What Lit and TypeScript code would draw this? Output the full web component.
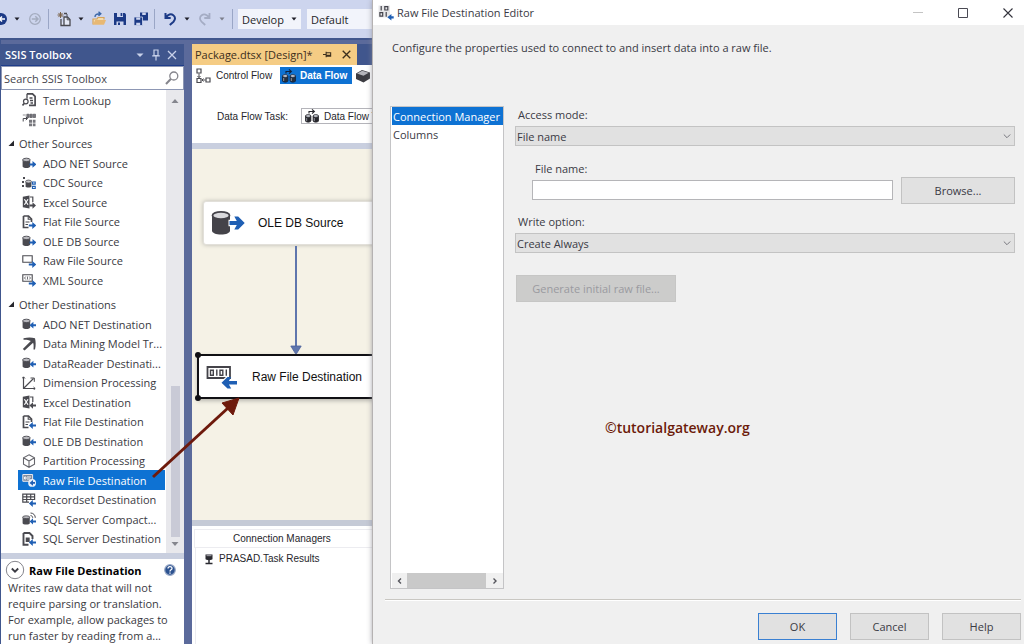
import { LitElement, html, svg, css, TemplateResult, SVGTemplateResult } from "lit";
import { customElement, property, state } from "lit/decorators.js";
import { classMap } from "lit/directives/class-map.js";

const INK = "#4a4a50";
const BLUE = "#1f5fb4";

const arrowRight = svg`<path d="M7.500 7.400h3V5L14.400 8.400 10.500 11.800V9.400h-3z" fill=${BLUE} />`;
const arrowLeft = svg`<path d="M14.400 7.200h-3V4.800L7.500 8.200l3.900 3.400V9.200h3z" fill=${BLUE} />`;
const cornerRight = svg`<path d="M6.800 9.400h3.500V7L14.200 10.500 10.300 14v-2.400H6.800z" fill=${BLUE} />`;
const cornerLeft = svg`<path d="M14.200 9.400h-3.400V7L6.900 10.500 10.800 14v-2.400h3.400z" fill=${BLUE} />`;
const cylinder = svg`<path d="M.6 4.200h7.600v6.400c0 .9-1.700 1.500-3.800 1.500S.6 11.500 .6 10.600z" fill=${INK} /><ellipse cx="4.400" cy="3.900" rx="3.800" ry="1.700" fill="#b9b9be" stroke=${INK} stroke-width=".9" />`;
const page = svg`<path d="M1.500 1h5l3 3v3M1.500 1v11.500h5" fill="none" stroke=${INK} stroke-width="1.700" /><path d="M6.200 1v3.300h3.300M3.500 7h4M3.500 9.500h2.500" fill="none" stroke=${INK} stroke-width="1.100" />`;
const excel = svg`<path d="M.8 1.800 7.500.6v12.800L.8 12.200z" fill=${INK} /><path d="m2.400 4.200 3.600 5.600M6 4.200 2.400 9.800" stroke="#fff" stroke-width="1.200" /><path d="M8 2h2.800v5" fill="none" stroke=${INK} stroke-width="1.200" />`;
const frame = svg`<path d="M.8 1.800h9.400v6.400H.8z" fill="none" stroke=${INK} stroke-width="1.100" />`;

const GLYPHS: Record<string, SVGTemplateResult> = {
  lookup: svg`<path d="M5 .8h5.500l2.600 2.600v9H7" fill="none" stroke=${INK} stroke-width="1.700" /><path d="M5 .8v5M7.500 5h3M8 7.500h3M8.500 10h2.500" stroke=${INK} stroke-width="1.300" /><circle cx="3.800" cy="8.500" r="2.300" fill="#fff" stroke=${INK} stroke-width="1.200" /><path d="m2.300 10.400-1.800 2" stroke=${INK} stroke-width="1.600" />`,
  unpivot: svg`<path d="M.8 2h3M4.800 1.200h2.400v3.300H4.800zM8 1.200h2.300v3.300H8zM11.200 1.200h2.300v3.300h-2.300z" fill="#77777d" stroke=${INK} stroke-width=".6" /><path d="M1.200 8.500V5.500h4M3.800 3.900l1.800 1.600-1.800 1.600" fill="none" stroke=${INK} /><path d="M7 6.800h3v2.900H7zM10.800 6.800h2.700v2.900h-2.700zM7 10.500h3v2.800H7zM10.800 10.500h2.700v2.800h-2.700z" fill="#77777d" />`,
  dbOut: svg`${cylinder}${arrowRight}`,
  dbIn: svg`${cylinder}${arrowLeft}`,
  cdc: svg`<path d="M1 1h2v2H1zM0 5h2v2H0zM0 9h2v2H0z" fill=${INK} /><path d="M3.600 5.800v5c0 1 5.800 1 5.800 0v-5z" fill=${INK} /><ellipse cx="6.500" cy="5.600" rx="2.900" ry="1.500" fill="#c8c8cc" stroke=${INK} stroke-width=".8" /><path d="M10.500 6h2.700v2.200h-2.700zM10.500 10.300h2.700v2.200h-2.700z" fill="none" stroke=${BLUE} stroke-width="1.200" />`,
  excelOut: svg`${excel}<path d="M7.500 9.400h3V7.200L14 10.500 10.500 13.800v-2.300h-3z" fill=${INK} />`,
  excelIn: svg`${excel}<path d="M14 9.400h-3V7.200L7.400 10.500 11 13.800v-2.300h3z" fill=${INK} />`,
  fileOut: svg`${page}${cornerRight}`,
  fileIn: svg`${page}${cornerLeft}`,
  rawOut: svg`${frame}${cornerRight}`,
  xmlOut: svg`${frame}<path d="M3.800 3.500 2.500 5l1.300 1.500M7.200 3.500 8.500 5 7.200 6.500M5.500 3.500v3" fill="none" stroke=${INK} stroke-width=".8" />${cornerRight}`,
  mining: svg`<path d="M1.500 1.200C6 .2 10 .4 13 1.200c.8 3 1 7 0 11.400l-1.500-.2c.3-3 .2-5-.4-6.600L2.600 13.600.8 12 8.800 4C6.800 3 4.500 2.700 1.500 2.800z" fill=${INK} />`,
  dimension: svg`<path d="M1.500 1v11.500H13M1.500 12.500 11.500 2.500" fill="none" stroke=${INK} stroke-width="1.200" /><path d="M8.500 2h3.800v3.800M0 2.500 1.500.8 3 2.500M11.500 11l1.700 1.500-1.700 1.500" fill="none" stroke=${INK} />`,
  partition: svg`<path d="M7 .8 12.500 3.800v6.400L7 13.300 1.500 10.200V3.800zM1.500 3.800 7 7l5.500-3.200M7 7v6" fill="none" stroke="#66666c" stroke-width="1.100" />`,
  rawIn: svg`<path d="M.8 1.500h9.800v6.800H.8z" fill="#7f8ca0" stroke="#e8e8ee" /><path d="M2.500 4h1.500v2H2.500zM5 4h4M5 6h3" fill="none" stroke="#fff" stroke-width=".9" /><circle cx="10.100" cy="9.900" r="3.900" fill="#e9f1fb" /><path d="M13 9.100h-2V7.100L7.500 9.900l3.500 2.800v-2h2z" fill=${BLUE} />`,
  recordset: svg`<path d="M.8 1.200h11.800v8H.8zM.8 3.800h11.800M.8 6.500h11.800M4.700 1.200v8M8.700 1.200v8" fill="none" stroke=${INK} stroke-width="1.200" /><path d="M7 7h7v7H7z" fill="#fff" />${cornerLeft}`,
  compact: svg`<path d="M.6 5.200h7.200v6c0 .8-1.600 1.400-3.600 1.400S.6 12 .6 11.200z" fill=${INK} /><ellipse cx="4.200" cy="5.200" rx="3.600" ry="1.400" fill="#b9b9be" stroke=${INK} stroke-width=".8" /><path d="M8.500 3.600c1.300 0 2.200.9 2.200 2.200M8.500 1c2.800 0 4.800 2 4.800 4.800" fill="none" stroke=${INK} /><path d="M14 8.400h-3V6.200L7.600 9.400 11 12.600v-2.200h3z" fill=${BLUE} />`,
  sqlIn: svg`<path d="M1.500 1h6l3 3v3M1.500 1v11.800h5" fill="none" stroke=${INK} stroke-width="1.900" /><path d="M3.700 5.500h4v4.500h-4z" fill=${INK} />${cornerLeft}`,
};

const glyph = (name: string): TemplateResult =>
  html`<svg class="glyph" viewBox="0 0 14 14" width="14" height="14" aria-hidden="true">${GLYPHS[name]}</svg>`;

const caret = (color = "#1e1e28"): TemplateResult =>
  html`<svg viewBox="0 0 8 8" width="8" height="8" aria-hidden="true"><path d="M1.500 2.500h5L4 5.500z" fill=${color} /></svg>`;

const dataFlowIcon = (line: string, fill: string): TemplateResult => html`
  <svg viewBox="0 0 16 16" width="16" height="16" aria-hidden="true">
    <path d="M5 5.500V3.500h5M8 1.400l2.400 2.100L8 5.600" fill="none" stroke=${line} stroke-width="1.100" />
    <path d="M1.500 8v5c0 1.500 5.400 1.500 5.400 0V8zM9.100 8v5c0 1.500 5.400 1.500 5.400 0V8z" fill=${fill} stroke=${line} stroke-width=".8" />
    <ellipse cx="4.200" cy="8" rx="2.700" ry="1.400" fill="#c9ccd4" stroke=${line} stroke-width=".8" />
    <ellipse cx="11.800" cy="8" rx="2.700" ry="1.400" fill="#c9ccd4" stroke=${line} stroke-width=".8" />
    <path d="M2.700 10v3M10.300 10v3" stroke="#9a9da6" stroke-width=".9" />
  </svg>`;

interface Entry {
  icon: string;
  name: string;
}

const COMMON: Entry[] = [
  { icon: "lookup", name: "Term Lookup" },
  { icon: "unpivot", name: "Unpivot" },
];

const SOURCES: Entry[] = [
  { icon: "dbOut", name: "ADO NET Source" },
  { icon: "cdc", name: "CDC Source" },
  { icon: "excelOut", name: "Excel Source" },
  { icon: "fileOut", name: "Flat File Source" },
  { icon: "dbOut", name: "OLE DB Source" },
  { icon: "rawOut", name: "Raw File Source" },
  { icon: "xmlOut", name: "XML Source" },
];

const DESTINATIONS: Entry[] = [
  { icon: "dbIn", name: "ADO NET Destination" },
  { icon: "mining", name: "Data Mining Model Tr..." },
  { icon: "dbIn", name: "DataReader Destinati..." },
  { icon: "dimension", name: "Dimension Processing" },
  { icon: "excelIn", name: "Excel Destination" },
  { icon: "fileIn", name: "Flat File Destination" },
  { icon: "dbIn", name: "OLE DB Destination" },
  { icon: "partition", name: "Partition Processing" },
  { icon: "rawIn", name: "Raw File Destination" },
  { icon: "recordset", name: "Recordset Destination" },
  { icon: "compact", name: "SQL Server Compact..." },
  { icon: "sqlIn", name: "SQL Server Destination" },
];

const base = css`
  * {
    box-sizing: border-box;
  }
  button,
  input,
  select {
    font: inherit;
    color: inherit;
    margin: 0;
    border: 0;
    border-radius: 0;
    padding: 0;
    background: none;
  }
  select {
    appearance: none;
  }
  h2,
  h3,
  p,
  ul {
    margin: 0;
    padding: 0;
    font: inherit;
    list-style: none;
  }
  svg {
    display: block;
    flex: none;
  }
`;

@customElement("ide-toolbar")
export class IdeToolbar extends LitElement {
  static styles = [
    base,
    css`
      :host {
        display: flex;
        align-items: center;
        height: 38px;
        background: #cdd5ee;
        color: #1e1e28;
      }
      .tool,
      .drop,
      .edge {
        display: flex;
        flex: none;
        align-items: center;
        justify-content: center;
        width: 21px;
        height: 24px;
      }
      .drop {
        width: 14px;
      }
      .edge {
        width: 10px;
        justify-content: flex-start;
      }
      .sep {
        flex: none;
        width: 1px;
        height: 20px;
        margin: 0 4px 0 3px;
        background: #9aa6c6;
      }
      .combo {
        display: grid;
        flex: none;
        align-items: center;
        width: 63px;
        height: 20px;
        margin-left: 1px;
        background: #f2f4fb;
      }
      .combo.wide {
        width: 100px;
        margin-left: 6px;
      }
      .combo select,
      .combo svg {
        grid-area: 1 / 1;
      }
      .combo select {
        height: 20px;
        padding: 0 4px;
      }
      .combo svg {
        justify-self: end;
        margin-right: 3px;
        pointer-events: none;
      }
    `,
  ];

  render() {
    return html`
      <button class="edge" aria-label="Navigate backward">
        <svg viewBox="0 0 8 14" width="8" height="14"><circle cx="1" cy="7" r="6" fill="#1c3a86" /><path d="M5 7H0M2 4.500-.5 7 2 9.500" fill="none" stroke="#fff" stroke-width="1.500" /></svg>
      </button>
      <button class="drop" aria-label="Backward history">${caret()}</button>
      <button class="tool" aria-label="Navigate forward">
        <svg viewBox="0 0 14 14" width="14" height="14"><circle cx="7" cy="7" r="5.300" fill="none" stroke="#a4acbf" stroke-width="1.300" /><path d="M3.800 7h6M7.300 4.300 10 7l-2.700 2.700" fill="none" stroke="#a4acbf" stroke-width="1.500" /></svg>
      </button>
      <span class="sep"></span>
      <button class="tool" aria-label="New project">
        <svg viewBox="0 0 16 16" width="16" height="16"><path d="M5 8v6.500h3M8 2.500h3M8 6h3.500l2.500 2.500v6H8V6z" fill="#e6eaf6" stroke="#4a4a50" stroke-width="1.300" /><path d="M11 3v2.500M11.200 6v2.800H14" fill="none" stroke="#4a4a50" /><path d="M4.500 1v6M1.500 4h6M2.400 1.900l4.200 4.200M6.600 1.900 2.400 6.100" stroke="#7a6248" stroke-width="1" /></svg>
      </button>
      <button class="drop" aria-label="New options">${caret()}</button>
      <button class="tool" aria-label="Open file">
        <svg viewBox="0 0 16 16" width="16" height="16"><path d="M2 13.500V8h4l1-1.500h6v2" fill="#f3dcae" stroke="#d7a45a" stroke-width="1.200" /><path d="M2 13.800 4.200 9H15l-2 4.800z" fill="#e8b873" /><path d="M4 6C4 3.500 6 2.800 9.500 2.800M7.500.8l2.300 2-2.300 2" fill="none" stroke="#3a66a8" stroke-width="1.400" /></svg>
      </button>
      <button class="tool" aria-label="Save">
        <svg viewBox="0 0 14 14" width="14" height="14"><path d="M1 1h10.800L13 2.200V13H1z" fill="#1c3a86" /><path d="M4 1h6v4H4zM3.500 9.500h7V13h-7z" fill="#cdd5ee" /><path d="M7.600 1h1.700v3H7.600zM5 10.500h2V13H5z" fill="#1c3a86" /></svg>
      </button>
      <button class="tool" aria-label="Save all">
        <svg viewBox="0 0 16 16" width="16" height="16"><path d="M7 1.500h8v8H7z" fill="#1c3a86" /><path d="M9.200 1.500h3.600v2.500H9.200z" fill="#cdd5ee" /><path d="M1 6h8.500v8.500H1z" fill="#1c3a86" stroke="#cdd5ee" stroke-width=".8" /><path d="M3.200 6.400h4v2.400h-4zM3.200 11.800h4v2.300h-4z" fill="#cdd5ee" /></svg>
      </button>
      <span class="sep"></span>
      <button class="tool" aria-label="Undo">
        <svg viewBox="0 0 14 14" width="14" height="14"><path d="M2.500 1v5h5.200M2.800 5.600C5 2.300 8 1.600 10.300 3.200c2.300 1.700 2.200 4.500.2 6.500L6.800 13" fill="none" stroke="#1c3a86" stroke-width="2" /></svg>
      </button>
      <button class="drop" aria-label="Undo history">${caret()}</button>
      <button class="tool" aria-label="Redo">
        <svg viewBox="0 0 14 14" width="14" height="14"><path d="M11.500 1v5H6.300M11.200 5.600C9 2.300 6 1.600 3.700 3.200 1.400 4.900 1.500 7.700 3.500 9.700L7.200 13" fill="none" stroke="#a4acc4" stroke-width="1.800" /></svg>
      </button>
      <button class="drop" aria-label="Redo history">${caret("#7c7f8c")}</button>
      <span class="sep"></span>
      <span class="combo">
        <select aria-label="Solution configuration"><option>Develop</option></select>
        ${caret()}
      </span>
      <span class="combo wide">
        <select aria-label="Solution platform"><option>Default</option></select>
        ${caret()}
      </span>
    `;
  }
}

@customElement("ssis-toolbox")
export class SsisToolbox extends LitElement {
  @state() private selected = "Raw File Destination";

  static styles = [
    base,
    css`
      :host {
        display: flex;
        flex-direction: column;
        min-height: 0;
        background: #fff;
        color: #3a3a42;
      }
      .head {
        display: flex;
        flex: none;
        align-items: center;
        height: 22px;
        padding: 0 4px;
        background: #40568d;
        border-bottom: 1px solid #1f3d8a;
        color: #fff;
      }
      .head h2 {
        flex: 1;
        font-weight: 600;
      }
      .head button {
        display: grid;
        place-items: center;
        width: 16px;
        height: 16px;
      }
      .search {
        display: flex;
        flex: none;
        align-items: center;
        height: 24px;
        padding: 0 4px 0 2px;
        border: 1px solid #8d97b4;
      }
      .search input {
        flex: 1;
        min-width: 0;
        height: 20px;
        padding: 0;
        outline: 0;
      }
      .search input::placeholder {
        color: #44444c;
        opacity: 1;
      }
      .scroll {
        display: flex;
        flex: 1;
        min-height: 0;
        overflow: hidden;
      }
      .list {
        display: flex;
        flex: 1;
        flex-direction: column;
        justify-content: flex-end;
        min-width: 0;
        padding-bottom: 5px;
      }
      .bar {
        display: flex;
        flex: none;
        flex-direction: column;
        align-items: center;
        width: 18px;
        padding: 7px 0 5px;
        background: #e8e8ec;
      }
      .track {
        display: flex;
        flex: 1;
        align-items: flex-end;
        padding-bottom: 3px;
      }
      .thumb {
        width: 9px;
        height: 35%;
        background: #c9cad6;
      }
      .item {
        display: flex;
        gap: 7px;
        align-items: center;
        width: calc(100% - 18px);
        height: 20px;
        margin-left: 17px;
        padding-left: 4px;
        text-align: left;
        white-space: nowrap;
      }
      li:nth-child(even) .item {
        height: 19px;
      }
      .item.on {
        background: #0e72d3;
        color: #fff;
      }
      .group {
        display: flex;
        flex: none;
        gap: 4px;
        align-items: center;
        height: 20px;
        margin-top: 4px;
        padding-left: 6px;
      }
      .about {
        flex: none;
        border-top: 6px solid #c9cfdf;
        padding: 1px 4px 0 4px;
      }
      .row {
        display: flex;
        align-items: center;
        gap: 4px;
        height: 20px;
      }
      .row h3 {
        flex: 1;
        color: #000;
        font-weight: 700;
      }
      .text {
        height: 64px;
        padding: 0 2px 0 3px;
        line-height: 16px;
      }
    `,
  ];

  private items(entries: Entry[]) {
    return html`<ul>
      ${entries.map(
        (e) => html`<li>
          <button class=${classMap({ item: true, on: e.name === this.selected })} @click=${() => (this.selected = e.name)}>
            ${glyph(e.icon)}<span>${e.name}</span>
          </button>
        </li>`
      )}
    </ul>`;
  }

  private group(name: string) {
    return html`<button class="group" aria-expanded="true">
      <svg viewBox="0 0 8 8" width="8" height="8" aria-hidden="true"><path d="M7 1.500v5.500H1.500z" fill="#26262c" /></svg>${name}
    </button>`;
  }

  render() {
    return html`
      <div class="head">
        <h2>SSIS Toolbox</h2>
        <button aria-label="Window options"><svg viewBox="0 0 10 10" width="10" height="10"><path d="M1.500 3.500h7L5 7z" fill="#c9d2ea" /></svg></button>
        <button aria-label="Pin"><svg viewBox="0 0 10 12" width="10" height="12"><path d="M3 1h4v5.500H3zM1.200 6.800h7.600M5 7v4.500" fill="none" stroke="#c9d2ea" stroke-width="1.200" /></svg></button>
        <button aria-label="Close"><svg viewBox="0 0 10 10" width="10" height="10"><path d="m1 1 8 8M9 1 1 9" stroke="#c9d2ea" stroke-width="1.300" /></svg></button>
      </div>
      <div class="search">
        <input type="text" placeholder="Search SSIS Toolbox" aria-label="Search SSIS Toolbox" />
        <svg viewBox="0 0 14 14" width="14" height="14" aria-hidden="true"><circle cx="8.800" cy="5" r="4" fill="none" stroke="#85858c" stroke-width="1.300" /><path d="M5.800 8 1 13" stroke="#85858c" stroke-width="2" /></svg>
      </div>
      <div class="scroll">
        <div class="list">
          ${this.items(COMMON)} ${this.group("Other Sources")} ${this.items(SOURCES)}
          ${this.group("Other Destinations")} ${this.items(DESTINATIONS)}
        </div>
        <div class="bar" aria-hidden="true">
          <svg viewBox="0 0 8 8" width="8" height="8"><path d="M.5 6h7L4 2z" fill="#85868e" /></svg>
          <div class="track"><div class="thumb"></div></div>
          <svg viewBox="0 0 8 8" width="8" height="8"><path d="M.5 2h7L4 6z" fill="#85868e" /></svg>
        </div>
      </div>
      <section class="about">
        <div class="row">
          <button aria-label="Collapse description"><svg viewBox="0 0 20 20" width="20" height="20"><circle cx="10" cy="10" r="8.700" fill="#fff" stroke="#85858c" /><path d="m6.800 8.500 3.200 3.200 3.200-3.200" fill="none" stroke="#3a3a42" stroke-width="1.800" /></svg></button>
          <h3>Raw File Destination</h3>
          <button aria-label="Help"><svg viewBox="0 0 20 20" width="20" height="20"><circle cx="10" cy="10" r="5.300" fill="#2c5290" stroke="#98a8c6" stroke-width="1.200" /><path d="M8 8.600c0-2.600 4-2.500 4-.2 0 1.500-2 1.400-2 3M10 12.400v1.300" fill="none" stroke="#fff" stroke-width="1.300" /></svg></button>
        </div>
        <p class="text">Writes raw data that will not require parsing or translation. For example, allow packages to run faster by reading from a...</p>
      </section>
    `;
  }
}

@customElement("package-designer")
export class PackageDesigner extends LitElement {
  static styles = [
    base,
    css`
      :host {
        display: flex;
        flex-direction: column;
        min-width: 0;
        color: #26262c;
        font-family: "Liberation Sans", Arial, sans-serif;
        font-size: 10px;
      }
      .strip {
        display: flex;
        flex: none;
        height: 21px;
        background: #40568d;
      }
      .doc {
        display: flex;
        align-items: center;
        gap: 10px;
        width: 165px;
        padding: 0 8px 0 3px;
        background: #f5cc84;
        color: #3d2f1c;
        font-family: "Open Sans", "Noto Sans", sans-serif;
        font-size: 11px;
        white-space: nowrap;
      }
      .doc span {
        flex: 1;
      }
      .top {
        flex: none;
        height: 84px;
        border-bottom: 6px solid #c9cfdf;
        background: #fff;
      }
      .views {
        display: flex;
        align-items: center;
        gap: 3px;
        padding: 2px 3px 0;
      }
      .view {
        display: flex;
        align-items: center;
        gap: 5px;
        height: 17px;
        white-space: nowrap;
      }
      .view.plain {
        width: 82px;
      }
      .view.on {
        gap: 3px;
        width: 72px;
        padding-left: 1px;
        background: #0e72d3;
        color: #fff;
        font-weight: 700;
      }
      .task {
        display: flex;
        align-items: center;
        gap: 13px;
        padding: 24px 0 0 25px;
        white-space: nowrap;
      }
      .pick {
        display: flex;
        flex: 1;
        align-items: center;
        gap: 4px;
        height: 16px;
        padding-left: 2px;
        border: 1px solid #b4b4ba;
      }
      .canvas {
        position: relative;
        flex: 1;
        min-height: 0;
        overflow: hidden;
        background: #f5f2e6;
      }
      .node {
        position: absolute;
        display: flex;
        align-items: center;
        gap: 13px;
        width: 260px;
        height: 44px;
        padding-left: 7px;
        background: #fff;
        color: #111;
        font-size: 12px;
      }
      .source {
        top: 52px;
        left: 11px;
        border: 1px solid #e2e0da;
        border-radius: 3px;
        box-shadow: 0 0 4px #b9b7b0;
      }
      .target {
        top: 205px;
        left: 5px;
        height: 45px;
        border: 2px solid #101014;
        box-shadow: 0 2px 4px #b9b7b0;
      }
      .link,
      .grips {
        position: absolute;
      }
      .link {
        top: 97px;
        left: 98px;
      }
      .grips {
        top: 202px;
        left: 2px;
      }
      .managers {
        flex: none;
        height: 124px;
        padding: 3px 0 0 2px;
        border-top: 6px solid #c5cad6;
        background: #fff;
        box-shadow: 0 -1px 0 #8f929c;
      }
      .managers h3 {
        height: 19px;
        padding-left: 38px;
        border: 1px solid #ececf0;
        line-height: 17px;
      }
      .conn {
        display: flex;
        gap: 4px;
        height: 96px;
        align-items: flex-start;
        padding: 5px 0 0 7px;
        margin-left: 1px;
        border-left: 1px solid #ececf0;
        line-height: 12px;
      }
    `,
  ];

  render() {
    return html`
      <div class="strip">
        <div class="doc">
          <span>Package.dtsx [Design]*</span>
          <svg viewBox="0 0 10 10" width="9" height="9" aria-hidden="true"><path d="M0 5h3M3.500 2v6M3.500 3h5v4h-5M3.500 6h5" fill="none" stroke="#3d2f1c" stroke-width="1.200" /></svg>
          <svg viewBox="0 0 10 10" width="9" height="9" aria-hidden="true"><path d="m.8.8 8.400 8.400M9.200.8.8 9.200" stroke="#3d2f1c" stroke-width="1.500" /></svg>
        </div>
      </div>
      <div class="top">
        <div class="views">
          <button class="view plain">
            <svg viewBox="0 0 16 16" width="16" height="16" aria-hidden="true"><path d="M2 1h4v4H2zM2 10.500h4v4H2zM11 10h4v4h-4z" fill="#fff" stroke="#4a4a50" stroke-width="1.200" /><path d="M4 5.500v4M2.500 8 4 9.700 5.500 8M10.500 12H7M8.500 10.500 7 12l1.500 1.500" fill="none" stroke="#4a4a50" /></svg>
            Control Flow
          </button>
          <button class="view on">${dataFlowIcon("#10233f", "#26303e")}Data Flow</button>
          <svg viewBox="0 0 16 16" width="16" height="16" aria-hidden="true"><path d="m1 5.500 6-3.500 8 2.500v6L8.500 14.500 1 11z" fill="#3c3c42" /><path d="m2 5.500 5.200-2.700 6.500 2L8.500 7.700z" fill="#b4b4ba" /></svg>
        </div>
        <div class="task">
          <span>Data Flow Task:</span>
          <div class="pick">${dataFlowIcon("#26262c", "#26262c")}<span>Data Flow Task</span></div>
        </div>
      </div>
      <div class="canvas">
        <div class="node source">
          <svg viewBox="0 0 34 26" width="34" height="26" aria-hidden="true">
            <path d="M1 5.500v15c0 2.500 4 4 9 4s9-1.500 9-4v-15z" fill="#444349" />
            <ellipse cx="10" cy="5.500" rx="8.500" ry="3.700" fill="#d9d9dc" stroke="#444349" stroke-width="1.800" />
            <path d="M17.500 9.800h7V4.500l9.500 8.500-9.500 8.500v-5.300h-7z" fill="#fff" />
            <path d="M18.500 11h7.300l-2.500-4.500h3.900L33.700 13l-6.500 6.500h-3.900l2.500-4.500h-7.300z" fill=${BLUE} />
          </svg>
          <span>OLE DB Source</span>
        </div>
        <svg class="link" viewBox="0 0 12 109" width="12" height="109" aria-hidden="true">
          <path d="M6 0v101" stroke="#5f76ad" stroke-width="2" /><path d="M.8 100h10.400L6 108.500z" fill="#5f76ad" stroke="#4a609a" stroke-width=".8" />
        </svg>
        <div class="node target">
          <svg viewBox="0 0 33 26" width="33" height="26" aria-hidden="true">
            <path d="M1.500 3h22.500v11H1.500z" fill="#fff" stroke="#444349" stroke-width="1.800" />
            <path d="M4.500 6.200h2.800v5H4.500zM14 6.200h2.800v5H14zM10.800 5.600v6.200M20.300 5.600v6.200" fill="none" stroke="#444349" stroke-width="1.400" />
            <path d="M14 18.500 22 11v4.500h10v6H22V26z" fill="#fff" />
            <path d="M15.500 18.800 21.500 13h3.700l-2.300 4H31v3.600h-8.100l2.300 4h-3.700z" fill=${BLUE} />
          </svg>
          <span>Raw File Destination</span>
        </div>
        <svg class="grips" viewBox="0 0 8 52" width="8" height="52" aria-hidden="true">
          <circle cx="4" cy="4" r="3" fill="#101014" /><circle cx="4" cy="47" r="3" fill="#101014" />
        </svg>
      </div>
      <section class="managers">
        <h3>Connection Managers</h3>
        <div class="conn">
          <svg viewBox="0 0 12 12" width="12" height="12" aria-hidden="true"><path d="M2.500 1.500h7V6c0 1.500-7 1.500-7 0z" fill="#2a2a30" /><path d="M3.500 1.200h5v2h-5z" fill="#8f8f96" /><path d="M6 7v3.500M2.500 10.500h7" stroke="#2a2a30" stroke-width="1.500" /></svg>
          <span>PRASAD.Task Results</span>
        </div>
      </section>
    `;
  }
}

@customElement("raw-file-editor")
export class RawFileEditor extends LitElement {
  @property() page = "Connection Manager";

  static styles = [
    base,
    css`
      :host {
        display: flex;
        flex-direction: column;
        background: #f0f0f0;
        color: #3a3a44;
      }
      .title {
        display: flex;
        flex: none;
        align-items: center;
        gap: 3px;
        height: 25px;
        padding: 0 6px 0 5px;
        background: #fff;
      }
      .title h2 {
        flex: 1;
      }
      .wins {
        display: flex;
        gap: 25px;
      }
      .wins button {
        display: grid;
        place-items: center;
        width: 20px;
        height: 20px;
      }
      .intro {
        flex: none;
        padding: 15px 19px 50px;
        line-height: 16px;
      }
      .main {
        display: flex;
        flex: 1;
        gap: 11px;
        min-height: 0;
        padding: 0 9px 0 17px;
      }
      .pages {
        display: flex;
        flex: none;
        flex-direction: column;
        width: 114px;
        padding-left: 1px;
        border: 1px solid #c4c4c6;
        background: #fff;
        overflow: hidden;
      }
      .pages ul {
        flex: 1;
      }
      .pages li button {
        display: block;
        width: 100%;
        height: 18px;
        padding-left: 1px;
        text-align: left;
        white-space: nowrap;
      }
      .pages .on {
        background: #0e72d3;
        color: #fff;
      }
      .hbar {
        display: flex;
        height: 15px;
        background: #f0f0f0;
      }
      .hbar button {
        display: grid;
        place-items: center;
        width: 15px;
      }
      .hbar button:last-child {
        width: 17px;
      }
      .hbar .thumb {
        flex: 1;
        background: #c9c9c9;
      }
      .form {
        display: flex;
        flex: 1;
        flex-direction: column;
        min-width: 0;
        padding-top: 1px;
      }
      .field {
        display: flex;
        flex-direction: column;
        gap: 3px;
      }
      .field label {
        padding-left: 3px;
        line-height: 16px;
      }
      .drop {
        display: grid;
        align-items: center;
      }
      .drop select,
      .drop svg {
        grid-area: 1 / 1;
      }
      .drop select {
        height: 20px;
        padding: 0 1px;
        border: 1px solid #c3c3c3;
        background: #e1e1e1;
      }
      .drop svg {
        justify-self: end;
        margin-right: 3px;
        pointer-events: none;
      }
      .file {
        display: flex;
        align-items: flex-end;
        gap: 8px;
        margin: 15px 0 10px;
        padding-left: 17px;
      }
      .file .field {
        flex: 1;
        padding-bottom: 4px;
      }
      .file input {
        width: 100%;
        height: 20px;
        padding: 0 3px;
        border: 1px solid #b5b5b8;
        background: #fff;
      }
      .push {
        width: 79px;
        height: 27px;
        border: 1px solid #c2c2c2;
        background: #e1e1e1;
      }
      .push.primary {
        border-color: #3a80d2;
      }
      .push.browse {
        width: 114px;
      }
      .push.make {
        width: 160px;
        margin: 22px 0 0 1px;
        border-color: #c6c6c5;
        background: #cccccb;
        color: #9a9aa0;
      }
      .mark {
        padding: 116px 0 0 90px;
        color: #6c1b0a;
        font-size: 14px;
        font-weight: 600;
      }
      .foot {
        display: flex;
        flex: none;
        justify-content: flex-end;
        gap: 13px;
        margin: 10px 3px 0 12px;
        padding: 13px 0 4px;
        border-top: 1px solid #c9c7c2;
        box-shadow: inset 0 1px 0 #fff;
      }
    `,
  ];

  render() {
    const chevron = html`<svg viewBox="0 0 10 10" width="10" height="10" aria-hidden="true"><path d="m1.800 3.500 3.200 3.200 3.200-3.200" fill="none" stroke="#77777e" stroke-width="1" /></svg>`;
    return html`
      <header class="title">
        <svg viewBox="0 0 16 16" width="16" height="16" aria-hidden="true"><path d="M.5.500h11.500v12H.5z" fill="#e6e6e8" /><path d="M3.200 1v4.500M6.800 1.600h3v3.400h-3zM1.900 7.600h2.800v3.600H1.900zM8.200 7v4.800" fill="none" stroke="#44444c" stroke-width="1.200" /><path d="M15.700 11.200h-2.300V9L9.300 12.300l4.100 3.300v-2.200h2.300z" fill=${BLUE} /></svg>
        <h2>Raw File Destination Editor</h2>
        <div class="wins">
          <button aria-label="Minimize"><svg viewBox="0 0 12 12" width="12" height="12"><path d="M1 5.500h10" stroke="#c4c4c4" /></svg></button>
          <button aria-label="Maximize"><svg viewBox="0 0 12 12" width="12" height="12"><path d="M1.500 1.500h9v9h-9z" fill="none" stroke="#4a4a54" stroke-width="1" /></svg></button>
          <button aria-label="Close"><svg viewBox="0 0 12 12" width="12" height="12"><path d="m1.500 1.500 9 9M10.500 1.500l-9 9" stroke="#33333c" stroke-width="1.100" /></svg></button>
        </div>
      </header>
      <p class="intro">Configure the properties used to connect to and insert data into a raw file.</p>
      <div class="main">
        <nav class="pages">
          <ul>
            ${["Connection Manager", "Columns"].map(
              (p) => html`<li><button class=${classMap({ on: p === this.page })} @click=${() => (this.page = p)}>${p}</button></li>`
            )}
          </ul>
          <div class="hbar">
            <button aria-label="Scroll left"><svg viewBox="0 0 8 8" width="8" height="8"><path d="M5 1.500 2.500 4 5 6.500" fill="none" stroke="#55555c" stroke-width="1.400" /></svg></button>
            <div class="thumb"></div>
            <button aria-label="Scroll right"><svg viewBox="0 0 8 8" width="8" height="8"><path d="M2.500 1.500 5 4 2.500 6.500" fill="none" stroke="#55555c" stroke-width="1.400" /></svg></button>
          </div>
        </nav>
        <div class="form">
          <div class="field">
            <label for="mode">Access mode:</label>
            <div class="drop"><select id="mode"><option>File name</option></select>${chevron}</div>
          </div>
          <div class="file">
            <div class="field">
              <label for="file">File name:</label>
              <input id="file" type="text" />
            </div>
            <button class="push browse">Browse...</button>
          </div>
          <div class="field">
            <label for="write">Write option:</label>
            <div class="drop"><select id="write"><option>Create Always</option></select>${chevron}</div>
          </div>
          <button class="push make" disabled>Generate initial raw file...</button>
          <p class="mark">©tutorialgateway.org</p>
        </div>
      </div>
      <footer class="foot">
        <button class="push primary">OK</button>
        <button class="push">Cancel</button>
        <button class="push">Help</button>
      </footer>
    `;
  }
}

@customElement("app-root")
export class AppRoot extends LitElement {
  static styles = [
    base,
    css`
      :host {
        position: relative;
        display: flex;
        flex-direction: column;
        height: 100vh;
        overflow: hidden;
        background: #5b6a9b;
        font-family: "Open Sans", "Noto Sans", sans-serif;
        font-size: 11px;
      }
      .work {
        display: grid;
        flex: 1;
        grid-template-columns: 183px minmax(0, 1fr);
        gap: 8px;
        min-height: 0;
        padding-top: 4px;
        border-top: 2px solid #40568d;
        border-left: 1px solid #40568d;
      }
      raw-file-editor {
        position: absolute;
        inset: 0 0 0 373px;
        box-shadow: 0 0 0 1px #b5b2b2, 0 0 6px #8a8a94;
      }
      .pointer {
        position: absolute;
        top: 394px;
        left: 148px;
        pointer-events: none;
      }
    `,
  ];

  render() {
    return html`
      <ide-toolbar></ide-toolbar>
      <div class="work">
        <ssis-toolbox></ssis-toolbox>
        <package-designer></package-designer>
      </div>
      <raw-file-editor></raw-file-editor>
      <svg class="pointer" viewBox="0 0 96 88" width="96" height="88" aria-hidden="true">
        <path d="M5 83 80 14" stroke="#6e1a0c" stroke-width="3" /><path d="M91 4 85 21 74 9z" fill="#6e1a0c" stroke="#6e1a0c" />
      </svg>
    `;
  }
}
